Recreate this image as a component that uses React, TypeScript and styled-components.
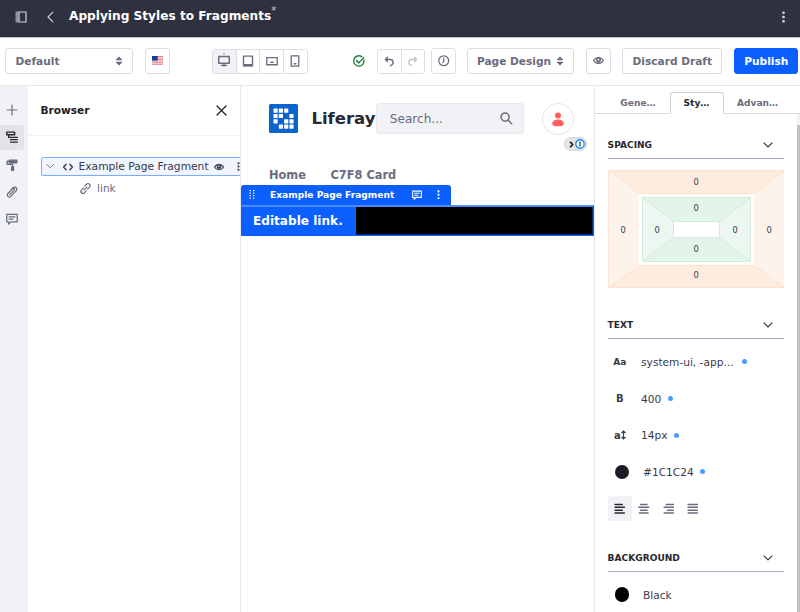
import React from 'react';
import styled, { createGlobalStyle } from 'styled-components';

const Global = createGlobalStyle`
  * { box-sizing: border-box; }
  html, body { margin: 0; padding: 0; background: #fff; }
  body { font-family: "DejaVu Sans", sans-serif; font-size: 10.6px; color: #272833; overflow: hidden; }
  svg { display: block; flex: none; }
`;

const Page = styled.div`
  width: 800px; height: 612px; overflow: hidden;
  display: flex; flex-direction: column; background: #fff;
`;

const Header = styled.header`
  flex: none; height: 38px; background: #30313f; border-bottom: 1px solid #c4c5cc;
  display: flex; align-items: center; padding: 0 15.5px 4px 14.5px; color: #cfd0da;
`;
const BackIcon = styled.div`margin: 0 12px 0 18.5px;`;
const Title = styled.h1`
  margin: 0 0 2px; font-size: 12.15px; line-height: 16px; font-weight: 700; color: #fff;
  white-space: nowrap; flex: 1; display: flex; align-items: flex-start;
`;
const Mark = styled.sup`font-size: 10px; line-height: 10px; font-weight: 400; color: #cfd0da; margin-top: -2px;`;

const Toolbar = styled.div`
  flex: none; height: 48px; border-bottom: 1px solid #e7e7ed;
  display: flex; align-items: center; padding: 0 0 1px 5px;
`;
const Button = styled.button<{ $w: number; $ml?: number; $primary?: boolean }>`
  flex: none; width: ${p => p.$w}px; height: 25.4px; margin: 0 0 0 ${p => p.$ml || 0}px;
  border: 1px solid ${p => (p.$primary ? '#0b5fff' : '#dcdde6')}; border-radius: 3px;
  background: ${p => (p.$primary ? '#0b5fff' : '#fff')};
  color: ${p => (p.$primary ? '#fff' : '#6b6c7e')};
  font: 700 10.6px/16px "DejaVu Sans", sans-serif; padding: 0; white-space: nowrap;
  display: flex; align-items: center; justify-content: center; gap: 5px;
`;
const Select = styled(Button)`justify-content: space-between; padding: 0 9.5px;`;
const Group = styled.div<{ $ml: number; $w: number }>`
  flex: none; display: flex; width: ${p => p.$w}px; height: 25px; margin-left: ${p => p.$ml}px;
  border: 1px solid #dcdde6; border-radius: 3px; overflow: hidden; color: #6b6c7e;
`;
const Segment = styled.div<{ $on?: boolean; $dim?: boolean }>`
  flex: 1; display: flex; align-items: center; justify-content: center;
  background: ${p => (p.$on ? '#f1f2f5' : '#fff')};
  color: ${p => (p.$dim ? '#c3c4cd' : '#6b6c7e')};
  & + & { border-left: 1px solid #dcdde6; }
`;
const Status = styled.div`margin-left: 45px; color: #287d3c;`;

const Body = styled.div`flex: 1; min-height: 0; display: flex;`;
const Rail = styled.nav`
  flex: none; width: 28px; background: #f1f2f5; padding-top: 12px;
  display: flex; flex-direction: column; gap: 3px;
`;
const RailItem = styled.div<{ $on?: boolean }>`
  width: 24.3px; height: 24.3px; border-radius: 0 3px 3px 0;
  display: flex; align-items: center; justify-content: center;
  background: ${p => (p.$on ? '#e2e3e8' : 'transparent')};
  color: ${p => (p.$on ? '#272833' : '#6b6c7e')};
`;

const Browser = styled.aside`flex: none; width: 213px; border-right: 1px solid #e7e7ed; overflow: hidden;`;
const BrowserHead = styled.div`
  height: 50px; border-bottom: 1.5px solid #f1f2f5; padding: 0 13px 1px 12.4px;
  display: flex; align-items: center; justify-content: space-between;
  font-weight: 700; color: #1c1c24;
`;
const Tree = styled.div`padding: 21px 0 0 13px; color: #393a4a;`;
const TreeNode = styled.div`
  width: 215px; height: 19px; border: 1px solid #80acff; border-radius: 2px 0 0 2px;
  background: #f0f5ff; display: flex; align-items: center; white-space: nowrap; padding-left: 4px;
`;
const Toggle = styled.span`margin-right: 8px; color: #6b6c7e;`;
const NodeLabel = styled.span`margin: 0 5px 0 6px; font-size: 10.7px;`;
const NodeMenu = styled.span`margin-left: 13px;`;
const TreeLeaf = styled.div`
  display: flex; align-items: center; gap: 6px; padding-left: 39px; height: 24px; color: #6b6c7e;
`;

const Canvas = styled.main`flex: none; width: 353px; display: flex; flex-direction: column;`;
const Site = styled.div`height: 58px; padding: 18px 20px 0 28.4px; display: flex; align-items: flex-start;`;
const SiteName = styled.div`
  width: 65px; margin-left: 13px; font-size: 16.5px; line-height: 29px; font-weight: 700; color: #272833;
`;
const Search = styled.div`
  width: 148px; height: 31px; margin-top: -1px; background: #f1f2f5; border: 1px solid #e7e7ed; border-radius: 3px;
  display: flex; align-items: center; justify-content: space-between; padding: 0 11px 0 12.5px;
  font-size: 12.1px; color: #6b6c7e;
`;
const Avatar = styled.div`
  width: 32px; height: 32px; margin: -1px 0 0 18px; border: 1px solid #e7e7ed; border-radius: 50%;
  display: flex; align-items: center; justify-content: center;
`;
const PillRow = styled.div`
  display: flex; justify-content: flex-end; align-items: flex-start; height: 20px; margin-top: -7px; padding-right: 7px;
`;
const Pill = styled.div`
  width: 23.500px; height: 14px; border-radius: 7px; background: #e4e4e6; border: 1px solid #d6d6d8;
  display: flex; align-items: center; justify-content: space-between; padding: 0 1px 0 4px;
`;
const Menu = styled.div`
  height: 28px; padding: 10px 0 0 28px; display: flex; gap: 24.500px;
  font-size: 11.4px; line-height: 16px; font-weight: 700; color: #6b6c7e;
`;
const FragmentBar = styled.div`
  width: 210px; height: 20px; background: #0b5fff; color: #fff; border-radius: 3px 3px 0 0;
  display: flex; align-items: center; font-size: 9.1px; font-weight: 700; padding: 0 11px 1px 8px;
`;
const FragmentName = styled.span`flex: 1; margin-left: 15px; white-space: nowrap;`;
const FragmentMenu = styled.span`margin-left: 15px;`;
const Fragment = styled.div`
  height: 31px; background: #000; border: 1px solid #0b5fff; border-top: 2px solid #4d8aff; display: flex;
  box-shadow: inset -1px -1px 0 rgba(11, 95, 255, 0.45);
`;
const EditableLink = styled.a`
  width: 114px; background: #0b5fff; color: #fff; font-size: 12.1px; font-weight: 700;
  display: flex; align-items: center; padding: 0 0 1px 11px; white-space: nowrap;
`;

const Panel = styled.aside`flex: 1; min-width: 0; border-left: 1px solid #e7e7ed; display: flex; flex-direction: column;`;
const Tabs = styled.div`
  flex: none; height: 28px; display: flex; align-items: flex-end; border-bottom: 1px solid #d9dae6; padding-left: 11.5px;
`;
const Tab = styled.div<{ $on?: boolean; $w: number }>`
  flex: none; width: ${p => p.$w}px; height: 22px; margin-bottom: -1px;
  display: flex; align-items: center; justify-content: center; font-size: 9.08px; font-weight: 700;
  color: ${p => (p.$on ? '#272833' : '#6b6c7e')}; white-space: nowrap;
  border: 1px solid ${p => (p.$on ? '#cdced9' : 'transparent')}; border-bottom-color: ${p => (p.$on ? '#fff' : 'transparent')};
  border-radius: 3px 3px 0 0; background: ${p => (p.$on ? '#fff' : 'transparent')};
`;
const PanelBody = styled.div`flex: 1; min-height: 0; display: flex; justify-content: space-between;`;
const Styles = styled.div`width: 189.300px; padding-left: 12.600px; overflow: hidden;`;
const Scroll = styled.div`width: 3px; background: #f1f1f1; padding-top: 11px;`;
const Thumb = styled.div`height: 100%; background: #c1c1c1;`;
const Section = styled.h2<{ $mt: number; $mb: number }>`
  margin: ${p => p.$mt}px 0 ${p => p.$mb}px; height: 27px; border-bottom: 1px solid #a7a9bc;
  display: flex; align-items: center; justify-content: space-between; padding-right: 11px;
  font-size: 9.08px; font-weight: 700; color: #272833;
`;
const Spacing = styled.div`
  display: grid; width: 177px; height: 118px;
  & > * { grid-area: 1 / 1; }
`;
const Values = styled.div`
  display: grid; grid-template-columns: 31px 37px 41px 37px 31px; grid-template-rows: 24.5px 28px 15px 24px 26.5px;
  font-size: 8.3px; line-height: 1; color: #393a4a;
`;
const Value = styled.span<{ $r: number; $c: number }>`
  grid-row: ${p => p.$r}; grid-column: ${p => p.$c}; place-self: center;
`;
const Field = styled.div<{ $h: number }>`
  height: ${p => p.$h}px; display: flex; align-items: center; color: #393a4a; white-space: nowrap;
`;
const Glyph = styled.span<{ $s?: number }>`
  width: 24.5px; margin-right: 9px; font-size: ${p => p.$s || 9}px; font-weight: 700; color: #393a4a;
  display: flex; justify-content: center; align-items: center;
`;
const Swatch = styled.span<{ $c: string }>`
  width: 14.5px; height: 14.5px; margin: 0 14px 0 7px; border-radius: 50%; background: ${p => p.$c};
`;
const Dot = styled.i<{ $ml?: number }>`width: 5px; height: 5px; margin-left: ${p => p.$ml || 6.5}px; border-radius: 50%; background: #4b9bff;`;
const Aligns = styled.div`display: flex; margin-top: 6px;`;
const Align = styled.div<{ $on?: boolean }>`
  width: 24.3px; height: 24.3px; border-radius: 2px; display: flex; align-items: center; justify-content: center;
  background: ${p => (p.$on ? '#f1f2f5' : 'transparent')}; color: ${p => (p.$on ? '#272833' : '#6b6c7e')};
`;

const Ico = ({ s = 12, children, sw = 1.6 }: { s?: number; sw?: number; children: React.ReactNode }) => (
  <svg width={s} height={s} viewBox="0 0 16 16" fill="none" stroke="currentColor" strokeWidth={sw}
    strokeLinecap="round" strokeLinejoin="round" overflow="visible">{children}</svg>
);
const Carets = () => (
  <svg width="8" height="10" viewBox="0 0 8 10" fill="currentColor">
    <path d="M4 .4 7 3.600a.4.4 0 0 1-.3.7H1.300a.4.4 0 0 1-.3-.7zM4 9.600 1 6.400a.4.4 0 0 1 .3-.7h5.400a.4.4 0 0 1 .3.7z" />
  </svg>
);
const Kebab = ({ s = 11 }: { s?: number }) => (
  <svg width="3" height={s} viewBox="0 0 3 12" fill="currentColor">
    <rect x=".2" y="0.400" width="2.600" height="2.600" rx=".9" /><rect x=".2" y="4.700" width="2.600" height="2.600" rx=".9" /><rect x=".2" y="9" width="2.600" height="2.600" rx=".9" />
  </svg>
);
const Chevron = ({ s = 10 }: { s?: number }) => <Ico s={s} sw={1.7}><path d="m1.500 4.500 6.500 6.500L14.500 4.500" /></Ico>;
const Eye = ({ s = 11 }: { s?: number }) => (
  <svg width={s} height={s} viewBox="0 0 16 16" fill="currentColor">
    <path fillRule="evenodd" d="M8 2.800C3.500 2.800.5 6.500 0 8c.5 1.500 3.500 5.200 8 5.200s7.500-3.700 8-5.200c-.5-1.500-3.500-5.200-8-5.200zM8 11.400C5 11.400 2.900 9.400 2 8c.5-.9 1.500-1.900 2.700-2.600A3.800 3.800 0 1 0 11.300 5.400C12.500 6.100 13.500 7.100 14 8c-.9 1.400-3 3.400-6 3.400zM8 5.400a1.300 1.300 0 1 1-1 2.300 1.300 1.300 0 0 1 1-2.300z" />
  </svg>
);
const Comment = ({ s = 12 }: { s?: number }) => (
  <Ico s={s} sw={1.7}><path d="M1 1.800h14v10H6.500L3.500 14.800v-3H1zM4.200 5.200h7.600M4.200 8.300h5" /></Ico>
);
const Flag = () => (
  <svg width="11" height="9" viewBox="0 0 11 9">
    <path fill="#fff" d="M0 0h11v9H0z" />
    <path stroke="#e0646c" strokeWidth=".8" d="M5.500.5H11M5.500 2H11M5.500 3.500H11M0 5.200h11M0 6.800h11M0 8.300h11" />
    <path fill="#1440a0" d="M0 0h5.800v4.600H0z" />
  </svg>
);
const Logo = () => (
  <svg width="29" height="29" viewBox="0 0 29 29">
    <rect width="29" height="29" rx="1.500" fill="#0b63ce" />
    <g fill="#fff">
      {[[0, 0], [1, 0], [2, 0], [0, 1], [1, 1], [3, 1], [0, 2], [2, 2], [3, 2], [1, 3], [2, 3], [3, 3]].map(([c, r]) => (
        <rect key={`${c}${r}`} x={4.500 + c * 5.300} y={4.600 + r * 5.300} width="4.200" height="4.200" rx=".4" />
      ))}
    </g>
  </svg>
);
const Grip = () => (
  <svg width="6" height="9" viewBox="0 0 6 9" fill="currentColor">
    {[0, 2.500, 5, 7.500].map(y => <path key={y} d={`M.5 ${y}h1.300v1.300H.5zM4 ${y}h1.300v1.300H4z`} />)}
  </svg>
);
const Box = () => (
  <svg width="177" height="118" viewBox="0 0 177 118" strokeWidth="1">
    <path fill="#fef3eb" stroke="#fde3d2" d="M.5.500h176v117H.5z" />
    <path fill="#feecdf" stroke="#fde1cf" d="M.5.500h176l-31 23h-114zM.5 117.500h176l-31-22h-114z" />
    <path fill="#fff" d="M31 24h115v71h-115z" />
    <path fill="#ebf7f0" stroke="#d3eadc" d="M34.500 27.500h108v64h-108z" />
    <path fill="#e3f5ea" stroke="#d2ebdc" d="M34.500 27.500h108l-31 24h-46zM34.500 91.500h108l-31-24h-46z" />
    <path fill="#fff" stroke="#d2ebdc" d="M65.500 51.500h46v16h-46z" />
  </svg>
);

const spacingCells: [number, number][] = [[1, 3], [2, 3], [4, 3], [5, 3], [3, 1], [3, 2], [3, 4], [3, 5]];
const alignPaths = [
  'M1.500 2h10M1.500 6h13M1.500 10h10M1.500 14h13',
  'M3.500 2h9M1 6h14M3.500 10h9M2 14h12',
  'M4.500 2h10M1.500 6h13M6 10h8.500M1.500 14h13',
  'M1.500 2h13M1.500 6h13M1.500 10h13M1.500 14h13',
];

export default function App() {
  return (
    <Page>
      <Global />
      <Header>
        <svg width="12" height="12" viewBox="0 0 12 12" fill="none" stroke="currentColor">
          <path strokeWidth="1.200" d="M4 1h7v10H4z" /><path strokeWidth="3" opacity=".6" d="M2 .5v11" />
        </svg>
        <BackIcon><Ico s={12} sw={1.500}><path d="M10.500 1.500 4 8l6.500 6.500" /></Ico></BackIcon>
        <Title>Applying Styles to Fragments<Mark>*</Mark></Title>
        <Kebab s={12} />
      </Header>
      <Toolbar>
        <Select $w={128}>Default<Carets /></Select>
        <Button $w={25} $ml={12}><Flag /></Button>
        <Group $ml={42} $w={95.500}>
          <Segment $on>
            <Ico sw={1.900}><path d="M1 2h14v9H1zM5 14h6M8 11v3M8-1.800v.1" /></Ico>
          </Segment>
          <Segment><Ico sw={1.900}><path d="M2 1.500h12v13H2z" /><path strokeWidth="3" d="M2.800 13.500h10.400" /></Ico></Segment>
          <Segment><Ico sw={1.800}><path d="M1 3.500h14v9.500H1zM6.300 9.600h3.400" /></Ico></Segment>
          <Segment><Ico sw={1.800}><path d="M3 1.200h10v13.600H3zM6.800 11.700h2.500" /></Ico></Segment>
        </Group>
        <Status><Ico sw={1.900}><path d="M14.600 6.500A6.900 6.900 0 1 1 11.800 2.300M4.800 7.500l3 3L14.300 3.500" /></Ico></Status>
        <Group $ml={12.500} $w={48}>
          <Segment><Ico s={11} sw={2.100}><path d="M5 2 2 5l3 3M2.500 5H9a4.200 4.200 0 0 1 2.500 7.700L9.500 14" /></Ico></Segment>
          <Segment $dim><Ico s={11} sw={2.100}><path d="m11 2 3 3-3 3M13.500 5H7a4.200 4.200 0 0 0-2.500 7.700L6.500 14" /></Ico></Segment>
        </Group>
        <Button $w={24.700} $ml={6}><Ico s={11.500} sw={1.700}><circle cx="8" cy="8" r="6.900" /><path d="M8 4.500v4L6.800 10.500" /></Ico></Button>
        <Button $w={106.500} $ml={11.600}>Page Design<Carets /></Button>
        <Button $w={25} $ml={12}><Eye s={11} /></Button>
        <Button $w={100} $ml={11.500}>Discard Draft</Button>
        <Button $w={64} $ml={12} $primary>Publish</Button>
      </Toolbar>
      <Body>
        <Rail>
          <RailItem><Ico><path d="M8 1.500v13M1.500 8h13" /></Ico></RailItem>
          <RailItem $on><Ico sw={1.900}><path d="M1 1.500h10.500V5H1zM6 8.500h9M6 11.500h9M6 14.800h9M3.500 5.500v3H6" /></Ico></RailItem>
          <RailItem>
            <Ico sw={1.800}><path fill="currentColor" d="M4.500 1.500h10V5h-10zM7.500 10.500H10V15H7.500z" /><path d="M4 3H1.500v4H8.700v3" /></Ico>
          </RailItem>
          <RailItem><Ico sw={1.600}><path d="M5 11.500 11 5.500a1.300 1.300 0 0 0-2-1.800L2.600 10a2.600 2.600 0 0 0 3.700 3.800l7.200-7.200a3 3 0 0 0-4.200-4.300L7 4.600" /></Ico></RailItem>
          <RailItem><Comment /></RailItem>
        </Rail>
        <Browser>
          <BrowserHead>Browser<Ico s={11} sw={1.800}><path d="m1.500 1.500 13 13M14.500 1.500l-13 13" /></Ico></BrowserHead>
          <Tree>
            <TreeNode>
              <Toggle><Chevron s={8.500} /></Toggle>
              <Ico s={10} sw={2.200}><path d="M5 3.500.9 8 5 12.500M11 3.500 15.100 8 11 12.500" /></Ico>
              <NodeLabel>Example Page Fragment</NodeLabel>
              <Eye s={10} /><NodeMenu><Kebab s={9} /></NodeMenu>
            </TreeNode>
            <TreeLeaf>
              <Ico s={11} sw={1.700}><path d="m6 10 4-4M7 4.500l2.500-2.700a2.900 2.900 0 0 1 4.300 4.300L11 9M9 11.500l-2.500 2.700a2.900 2.900 0 0 1-4.300-4.300L5 7" /></Ico>
              link
            </TreeLeaf>
          </Tree>
        </Browser>
        <Canvas>
          <Site>
            <Logo />
            <SiteName>Liferay</SiteName>
            <Search>Search...<Ico s={12.500} sw={1.900}><circle cx="6.500" cy="6.500" r="5.200" /><path d="m10.500 10.500 4.500 4.500" /></Ico></Search>
            <Avatar>
              <svg width="12" height="15" viewBox="0 0 12 15" fill="#ff5f5f"><circle cx="6" cy="3.500" r="3" /><path d="M.3 12C.3 9 2.500 7.500 6 7.500S11.700 9 11.700 12c0 1.700-2.500 2.300-5.700 2.300S.3 13.700.3 12z" /></svg>
            </Avatar>
          </Site>
          <PillRow>
            <Pill>
              <svg width="5" height="7" viewBox="0 0 5 7" fill="none" stroke="#111" strokeWidth="1.500"><path d="m1 .7 2.700 2.800L1 6.300" /></svg>
              <svg width="10" height="10" viewBox="0 0 10 10" fill="#fff"><circle cx="5" cy="5" r="4.200" stroke="#1b8cff" strokeWidth="1.400" /><path stroke="#222" strokeWidth="1.200" d="M5 2.500v5" /></svg>
            </Pill>
          </PillRow>
          <Menu><span>Home</span><span>C7F8 Card</span></Menu>
          <FragmentBar><Grip /><FragmentName>Example Page Fragment</FragmentName><Comment s={10} /><FragmentMenu><Kebab s={9.500} /></FragmentMenu></FragmentBar>
          <Fragment><EditableLink>Editable link.</EditableLink></Fragment>
        </Canvas>
        <Panel>
          <Tabs><Tab $w={63}>Gene…</Tab><Tab $w={54} $on>Sty…</Tab><Tab $w={68}>Advan…</Tab></Tabs>
          <PanelBody>
            <Styles>
              <Section $mt={18} $mb={11}>SPACING<Chevron /></Section>
              <Spacing>
                <Box />
                <Values>{spacingCells.map(([r, c]) => <Value key={`${r}${c}`} $r={r} $c={c}>0</Value>)}</Values>
              </Spacing>
              <Section $mt={23.500} $mb={5}>TEXT<Chevron /></Section>
              <Field $h={36.700}><Glyph>Aa</Glyph>system-ui, -app…<Dot $ml={8.500} /></Field>
              <Field $h={36.700}><Glyph $s={10}>B</Glyph>400<Dot /></Field>
              <Field $h={36.700}>
                <Glyph $s={10}>a
                  <svg width="5" height="10" viewBox="0 0 5 10" fill="none" stroke="currentColor" strokeWidth="1.200"><path d="M2.500 1v8M.5 3 2.500 1l2 2M.5 7 2.500 9l2-2" /></svg>
                </Glyph>14px<Dot />
              </Field>
              <Field $h={36.700}><Swatch $c="#1c1c24" />#1C1C24<Dot /></Field>
              <Aligns>{alignPaths.map((d, i) => <Align key={d} $on={i === 0}><Ico s={11.500} sw={2}><path d={d} /></Ico></Align>)}</Aligns>
              <Section $mt={24} $mb={5}>BACKGROUND<Chevron /></Section>
              <Field $h={36}><Swatch $c="#000" />Black</Field>
            </Styles>
            <Scroll><Thumb /></Scroll>
          </PanelBody>
        </Panel>
      </Body>
    </Page>
  );
}
